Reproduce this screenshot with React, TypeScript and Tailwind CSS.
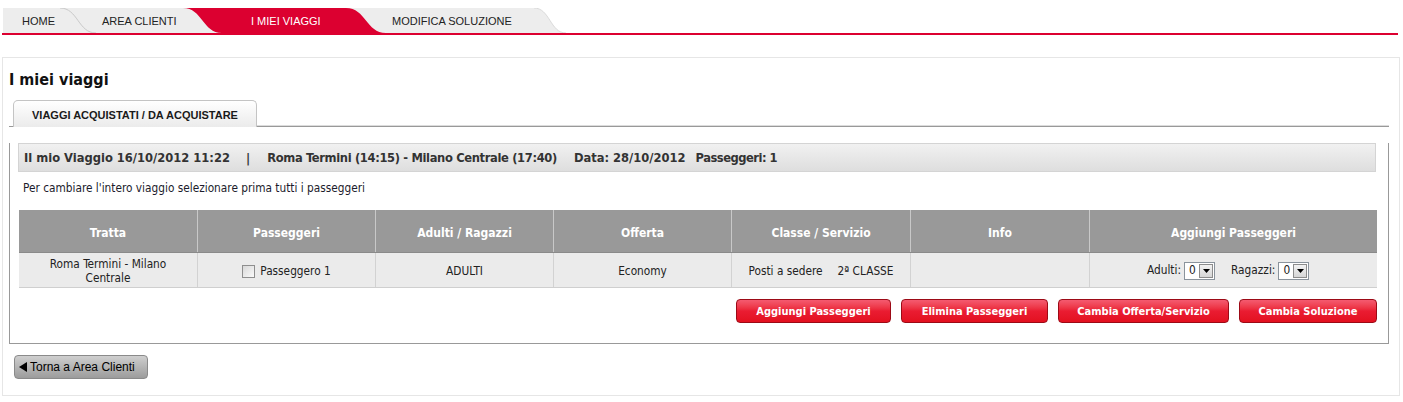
import React from 'react';

const arial = "font-['Liberation_Sans',Arial,sans-serif]";

function Curve({ w, left, right, line }: { w: number; left: string; right: string; line?: string }) {
  const d = `M0,0 C${w * 0.5},0 ${w * 0.5},25 ${w},25`;
  return (
    <svg width={w} height={25} className="block shrink-0">
      <rect width={w} height={25} fill={right} />
      <path d={`${d} L0,25 Z`} fill={left} />
      {line && <path d={d} fill="none" stroke={line} strokeWidth={1} />}
    </svg>
  );
}

function Select() {
  return (
    <div className="flex items-center w-[31px] h-[18px] border border-[#8a939c] bg-white">
      <span className="flex-1 pl-[4px] leading-none">0</span>
      <div className="w-[14px] h-[14px] mr-[1px] flex items-center justify-center bg-gradient-to-b from-[#f2f2f2] to-[#d6d6d6] border border-[#8c8c8c]">
        <svg width="7" height="4" viewBox="0 0 7 4">
          <polygon points="0,0 7,0 3.5,4" fill="#000" />
        </svg>
      </div>
    </div>
  );
}

function RedButton({ label, w }: { label: string; w: string }) {
  return (
    <button
      className={`${w} h-[24px] rounded-[4px] border border-[#9c0a16] bg-gradient-to-b from-[#f45a70] via-[#ea1c32] to-[#e3101f] text-white font-bold text-[11px] leading-none`}
    >
      {label}
    </button>
  );
}

export default function App() {
  const headers = ['Tratta', 'Passeggeri', 'Adulti / Ragazzi', 'Offerta', 'Classe / Servizio', 'Info', 'Aggiungi Passeggeri'];
  const grid = 'grid grid-cols-[178px_178px_178px_178px_179px_179px_288px]';

  return (
    <div className="w-[1403px] h-[402px] bg-white font-['DejaVu_Sans_Condensed','DejaVu_Sans',Tahoma,sans-serif] text-[#222]">
      {/* top navigation */}
      <div className="pt-2">
        <div className={`flex pl-[3px] h-[25px] text-[11px] ${arial}`}>
          <div className="w-[57px] bg-[#ededed] flex items-center pl-[19px] pt-[1px]">HOME</div>
          <Curve w={36} left="#ededed" right="#ededed" line="#c9c9c9" />
          <div className="w-[87px] bg-[#ededed] flex items-center pl-[6px] pt-[1px]">AREA CLIENTI</div>
          <Curve w={39} left="#ededed" right="#dc0030" />
          <div className="w-[124px] bg-[#dc0030] text-white flex items-center pl-[29px] pt-[1px]">I MIEI VIAGGI</div>
          <Curve w={40} left="#dc0030" right="#ededed" />
          <div className="w-[148px] bg-[#ededed] flex items-center pl-[6px] pt-[1px]">MODIFICA SOLUZIONE</div>
          <Curve w={32} left="#ededed" right="#ffffff" line="#dadada" />
        </div>
        <div className="ml-[2px] w-[1396px] h-[2px] bg-[#dc0030]" />
      </div>

      {/* main panel */}
      <div className="mt-[22px] ml-[2px] w-[1398px] border border-[#e6e6e6] px-[6px] pb-[16px]">
        <h1 className="mt-[12px] h-[20px] leading-[20px] font-bold text-[16px] text-[#111]">I miei viaggi</h1>

        <div className="mt-[10px] flex h-[27px] mr-[4px]">
          <div className="w-[4px] border-b border-[#999]" />
          <div className={`w-[244px] h-[27px] rounded-t-[5px] border border-b-0 border-[#c4c4c4] bg-gradient-to-b from-white to-[#ebebeb] flex justify-center pt-[6px] font-bold text-[11px] text-[#1a1a1a] ${arial}`}>
            VIAGGI ACQUISTATI / DA ACQUISTARE
          </div>
          <div className="flex-1 border-b border-[#999] shadow-[inset_0_-1px_0_#dcdcdc]" />
        </div>

        <div className="mr-[4px] border-x border-b border-[#999] pb-[20px]">
          <div className="mt-[16px] ml-[8px] w-[1358px] h-[29px] border border-[#d4d4d4] bg-gradient-to-b from-[#f1f1f1] to-[#dedede] flex items-center pl-[5px] pt-[1px] font-bold text-[12.8px] text-[#333]">
            <span>Il mio Viaggio 16/10/2012 11:22</span>
            <span className="ml-[16px]">|</span>
            <span className="ml-[17px] tracking-[-0.35px]">Roma Termini (14:15) - Milano Centrale (17:40)</span>
            <span className="ml-[17px]">Data: 28/10/2012</span>
            <span className="ml-[10px] tracking-[-0.5px]">Passeggeri: 1</span>
          </div>

          <p className="mt-[10px] ml-[13px] h-[12px] leading-[12px] text-[11.75px] text-[#1c1c2c]">
            Per cambiare l'intero viaggio selezionare prima tutti i passeggeri
          </p>

          <div className="mt-[16px] ml-[9px] w-[1358px]">
            <div className={`${grid} h-[43px] bg-[#999999] border-b border-[#8a8a8a]`}>
              {headers.map((h, i) => (
                <div
                  key={h}
                  className={`flex items-center justify-center pt-[3px] text-white font-bold text-[12px] ${i > 0 ? 'border-l border-[#c8c8c8]' : ''}`}
                >
                  {h}
                </div>
              ))}
            </div>
            <div className={`${grid} h-[35px] bg-[#ebebeb] border-b border-[#cfcfcf] text-[11.75px] text-[#222]`}>
              <div className="flex items-center justify-center text-center leading-[14px] pt-[1px]">
                Roma Termini - Milano<br />Centrale
              </div>
              <div className="flex items-center justify-center border-l border-[#d2d2d2] gap-[5px] pt-[3px]">
                <span className="w-[13px] h-[13px] border border-[#8e8e8e] bg-gradient-to-br from-[#d8d8d8] to-[#fafafa]" />
                <span>Passeggero 1</span>
              </div>
              <div className="flex items-center justify-center border-l border-[#d2d2d2] pt-[3px]">ADULTI</div>
              <div className="flex items-center justify-center border-l border-[#d2d2d2] pt-[3px]">Economy</div>
              <div className="flex items-center justify-center border-l border-[#d2d2d2] gap-[15px] pt-[3px]">
                <span>Posti a sedere</span>
                <span>2ª CLASSE</span>
              </div>
              <div className="border-l border-[#d2d2d2]" />
              <div className="flex items-center border-l border-[#d2d2d2] pl-[57px] pt-[1px]">
                <span className="mr-[3px]">Adulti:</span>
                <Select />
                <span className="ml-[16px] mr-[3px]">Ragazzi:</span>
                <Select />
              </div>
            </div>

            <div className="mt-[11px] flex justify-end gap-[10px]">
              <RedButton label="Aggiungi Passeggeri" w="w-[155px]" />
              <RedButton label="Elimina Passeggeri" w="w-[147px]" />
              <RedButton label="Cambia Offerta/Servizio" w="w-[171px]" />
              <RedButton label="Cambia Soluzione" w="w-[138px]" />
            </div>
          </div>
        </div>

        <button
          className={`mt-[11px] ml-[5px] w-[134px] h-[24px] rounded-[4px] border border-[#8a8a8a] bg-gradient-to-b from-[#cfcfcf] to-[#9c9c9c] flex items-center pl-[4px] gap-[3px] text-[12px] text-black ${arial}`}
        >
          <svg width="8" height="10" viewBox="0 0 8 10">
            <polygon points="8,0 8,10 0,5" fill="#000" />
          </svg>
          <span>Torna a Area Clienti</span>
        </button>
      </div>
    </div>
  );
}
